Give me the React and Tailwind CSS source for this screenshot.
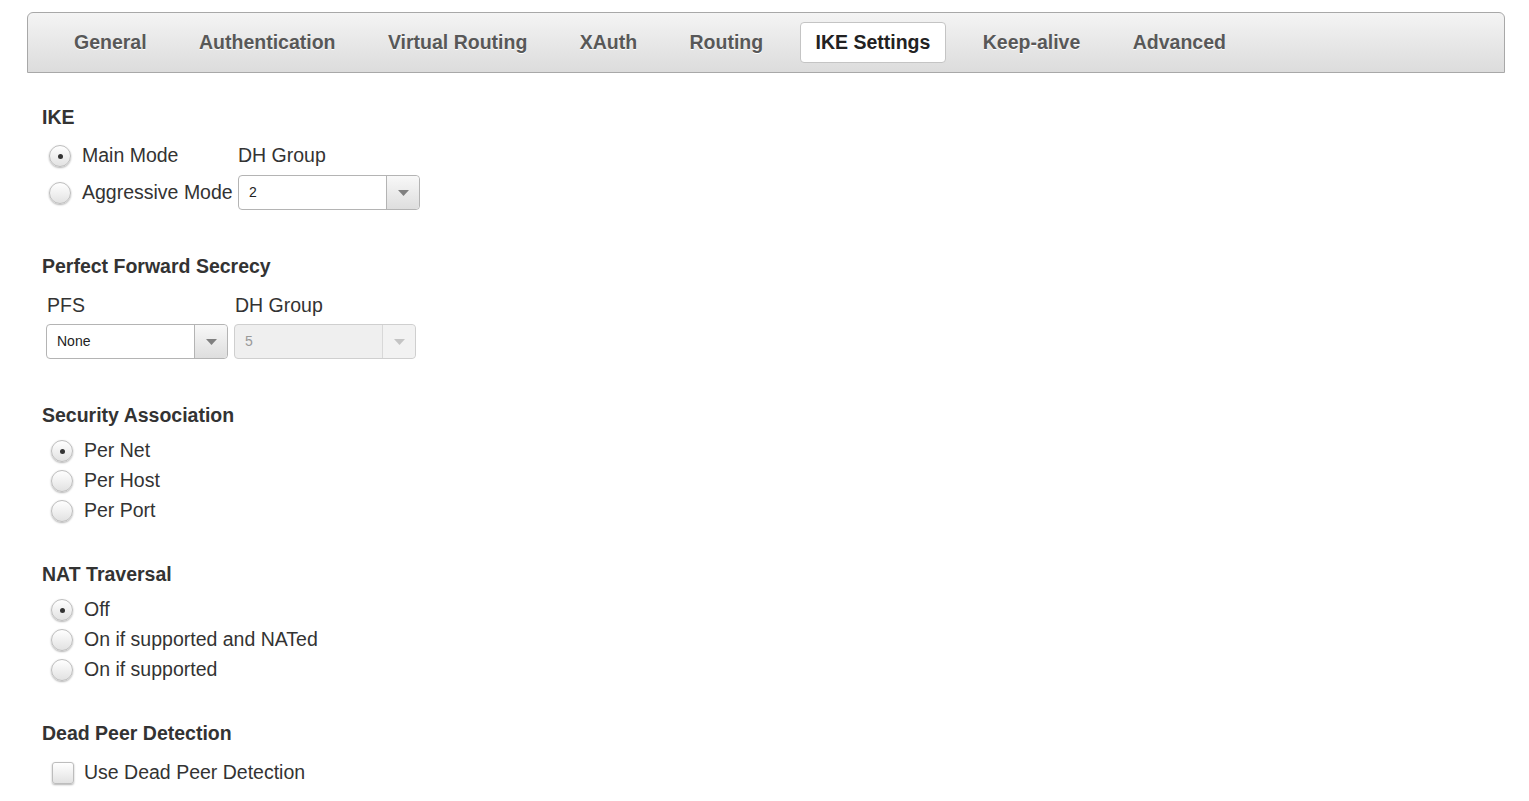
import React, { useState } from "react";

const tabs = [
  "General",
  "Authentication",
  "Virtual Routing",
  "XAuth",
  "Routing",
  "IKE Settings",
  "Keep-alive",
  "Advanced",
];

const Radio = ({ checked, onClick }) => (
  <span
    onClick={onClick}
    className="flex h-[22px] w-[22px] shrink-0 items-center justify-center rounded-full border border-[#bdbdbd] bg-gradient-to-b from-[#ffffff] to-[#e2e2e2] shadow-[0_1px_2px_rgba(0,0,0,0.3)]"
  >
    {checked && <span className="h-[5px] w-[5px] rounded-full bg-[#333]" />}
  </span>
);

const Select = ({ value, disabled }) => (
  <div
    className={`flex h-[35px] w-[182px] items-stretch rounded-[4px] border ${
      disabled ? "bg-[#efefef] border-[#cfcfcf]" : "bg-white border-[#b4b4b4]"
    }`}
  >
    <span
      className={`flex flex-1 items-center pl-[10px] text-[14px] ${
        disabled ? "text-[#999]" : "text-[#222]"
      }`}
    >
      {value}
    </span>
    <span
      className={`flex w-[33px] items-center justify-center rounded-r-[4px] border-l ${
        disabled
          ? "border-[#d8d8d8] bg-[#f2f2f2]"
          : "border-[#b4b4b4] bg-gradient-to-b from-[#f8f8f8] to-[#dedede]"
      }`}
    >
      <svg width="11" height="6" viewBox="0 0 11 6">
        <path d="M0 0 L11 0 L5.5 6 Z" fill={disabled ? "#c4c4c4" : "#808080"} />
      </svg>
    </span>
  </div>
);

const Heading = ({ children, className = "" }) => (
  <div className={`h-[24px] text-[19.5px] font-bold leading-[24px] text-[#333] ${className}`}>
    {children}
  </div>
);

const RadioList = ({ options, selected, onSelect }) => (
  <div className="flex flex-col">
    {options.map((o, i) => (
      <div key={o} className="flex h-[30px] items-center pl-[9px]">
        <Radio checked={selected === i} onClick={() => onSelect(i)} />
        <span className="ml-[11px] text-[19.5px] text-[#333]">{o}</span>
      </div>
    ))}
  </div>
);

export default function App() {
  const [ike, setIke] = useState(0);
  const [sa, setSa] = useState(0);
  const [nat, setNat] = useState(0);
  const [dpd, setDpd] = useState(false);

  return (
    <div
      className="min-h-screen bg-white"
      style={{ fontFamily: '"Liberation Sans", Arial, sans-serif' }}
    >
      {/* tab bar */}
      <div className="pt-[12px] pl-[27px] pr-[24px]">
        <div className="flex h-[61px] items-center gap-[20.4px] rounded-t-[6px] border border-[#a8a8a8] bg-gradient-to-b from-[#f4f4f4] to-[#dcdcdc] pl-[30px]">
          {tabs.map((t) => {
            const active = t === "IKE Settings";
            return (
              <div
                key={t}
                className={`flex h-[41px] items-center rounded-[4px] px-[15px] text-[19.5px] font-bold ${
                  active
                    ? "border border-[#c4c4c4] bg-white text-[#222]"
                    : "border border-transparent text-[#585858] [text-shadow:0_1px_0_#fff]"
                }`}
              >
                {t}
              </div>
            );
          })}
        </div>
      </div>

      <div className="pl-[42px]">
        {/* IKE */}
        <Heading className="mt-[32px]">IKE</Heading>
        <div className="mt-[15px] grid grid-cols-[196px_auto] grid-rows-[24px_35px] gap-y-[7px]">
          <div className="flex items-center pl-[7px]">
            <Radio checked={ike === 0} onClick={() => setIke(0)} />
            <span className="ml-[11px] text-[19.5px] text-[#333]">Main Mode</span>
          </div>
          <div className="flex items-center text-[19.5px] text-[#333]">DH Group</div>
          <div className="flex items-center pl-[7px]">
            <Radio checked={ike === 1} onClick={() => setIke(1)} />
            <span className="ml-[11px] text-[19.5px] text-[#333]">Aggressive Mode</span>
          </div>
          <div className="flex items-center">
            <Select value="2" />
          </div>
        </div>

        {/* PFS */}
        <Heading className="mt-[44px]">Perfect Forward Secrecy</Heading>
        <div className="mt-[15px] flex gap-[6px] pl-[4px]">
          <div className="flex flex-col gap-[7px]">
            <div className="h-[24px] pl-[1px] text-[19.5px] leading-[24px] text-[#333]">PFS</div>
            <Select value="None" />
          </div>
          <div className="flex flex-col gap-[7px]">
            <div className="h-[24px] pl-[1px] text-[19.5px] leading-[24px] text-[#333]">DH Group</div>
            <Select value="5" disabled />
          </div>
        </div>

        {/* SA */}
        <Heading className="mt-[44px]">Security Association</Heading>
        <div className="mt-[9px]">
          <RadioList
            options={["Per Net", "Per Host", "Per Port"]}
            selected={sa}
            onSelect={setSa}
          />
        </div>

        {/* NAT */}
        <Heading className="mt-[36px]">NAT Traversal</Heading>
        <div className="mt-[9px]">
          <RadioList
            options={["Off", "On if supported and NATed", "On if supported"]}
            selected={nat}
            onSelect={setNat}
          />
        </div>

        {/* DPD */}
        <Heading className="mt-[36px]">Dead Peer Detection</Heading>
        <div className="mt-[13px] flex h-[30px] items-center pl-[10px]">
          <span
            onClick={() => setDpd(!dpd)}
            className="flex h-[22px] w-[22px] items-center justify-center rounded-[3px] border border-[#bdbdbd] bg-gradient-to-b from-[#ffffff] to-[#e2e2e2] shadow-[0_1px_2px_rgba(0,0,0,0.3)]"
          >
            {dpd && (
              <svg width="14" height="14" viewBox="0 0 14 14">
                <path d="M2 7 L6 11 L12 3" stroke="#333" strokeWidth="2" fill="none" />
              </svg>
            )}
          </span>
          <span className="ml-[10px] text-[19.5px] text-[#333]">Use Dead Peer Detection</span>
        </div>
      </div>
    </div>
  );
}
